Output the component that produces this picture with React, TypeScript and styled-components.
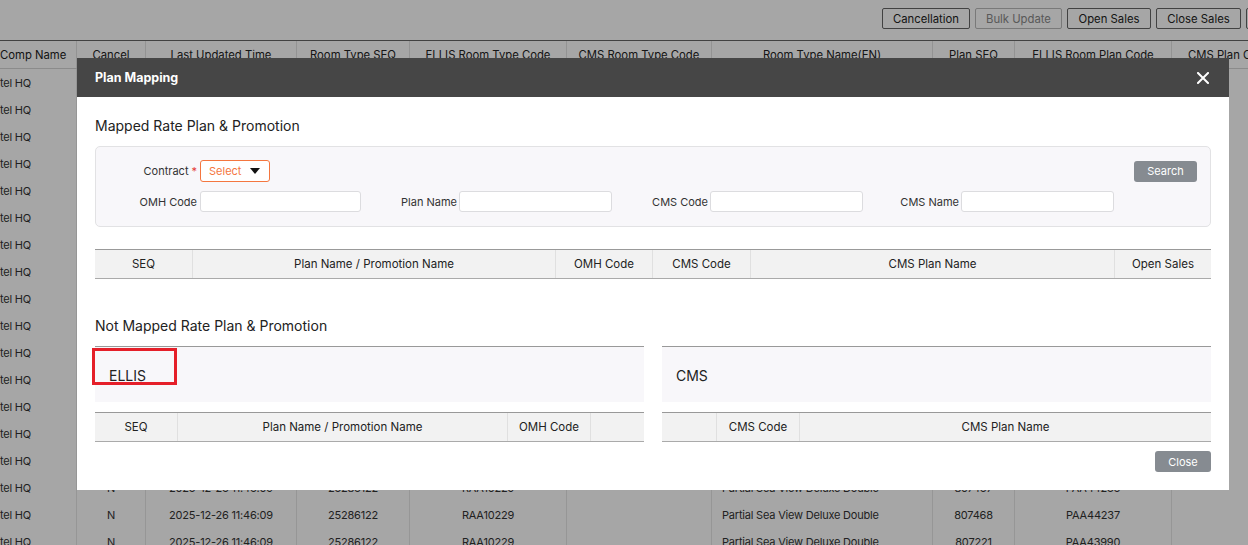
import { FC } from "react";
import styled, { createGlobalStyle } from "styled-components";

const GlobalStyle = createGlobalStyle`
  html, body {
    margin: 0;
    padding: 0;
    background: #ffffff;
  }
  body {
    font-family: Inter, "Noto Sans", Arial, sans-serif;
    color: #222;
  }
  * {
    box-sizing: border-box;
  }
`;

const Page = styled.div`
  position: relative;
  width: 1248px;
  height: 545px;
  overflow: hidden;
  background: #fff;
`;

const Toolbar = styled.div`
  display: flex;
  gap: 5px;
  height: 40px;
  padding: 8px 0 0 882px;
  overflow: hidden;
  white-space: nowrap;
`;

const ToolButton = styled.button<{ $w: number; $disabled?: boolean }>`
  flex: none;
  width: ${(p) => p.$w}px;
  height: 21px;
  padding: 0;
  font-family: inherit;
  font-size: 11.3px;
  background: #fff;
  border: 1px solid ${(p) => (p.$disabled ? "#bbb" : "#666")};
  color: ${(p) => (p.$disabled ? "#8a8a8a" : "#222")};
  border-radius: 2px;
`;

const COLS = "76px 69px 151px 113px 157px 145px 221px 82px 157px 1fr";

const BgHead = styled.div`
  display: grid;
  grid-template-columns: ${COLS};
  height: 29px;
  border-top: 1px solid #666;
  border-bottom: 1px solid #d6d6d6;
`;

const BgHeadCell = styled.div<{ $align?: "left" | "center" | "start" }>`
  display: flex;
  align-items: center;
  justify-content: ${(p) => (p.$align === "center" || !p.$align ? "center" : "flex-start")};
  padding-left: ${(p) => (p.$align === "start" ? "16px" : "0")};
  font-size: 11.3px;
  color: #222;
  white-space: nowrap;
  overflow: hidden;
  border-left: ${(p) => (p.$align === "left" ? "none" : "1px solid #e2e2e2")};
`;

const BgRow = styled.div`
  display: grid;
  grid-template-columns: ${COLS};
  height: 27px;
`;

const BgCell = styled.div<{ $align?: "left" | "center" | "start" }>`
  display: flex;
  align-items: center;
  justify-content: ${(p) => (p.$align === "center" || !p.$align ? "center" : "flex-start")};
  padding-left: ${(p) => (p.$align === "start" ? "10px" : "0")};
  font-size: 11px;
  letter-spacing: -0.2px;
  color: #333;
  white-space: nowrap;
  overflow: hidden;
  border-left: ${(p) => (p.$align === "left" ? "none" : "1px solid #e6e6e6")};
`;

const Dim = styled.div`
  position: absolute;
  inset: 0;
  background: rgba(0, 0, 0, 0.35);
`;

const Modal = styled.div`
  position: absolute;
  left: 77px;
  top: 58px;
  width: 1152px;
  background: #fff;
`;

const ModalHeader = styled.div`
  display: flex;
  align-items: center;
  justify-content: space-between;
  height: 39px;
  padding: 0 20px 0 18px;
  background: #464646;
`;

const ModalTitle = styled.div`
  color: #fff;
  font-size: 12.5px;
  font-weight: 700;
`;

const ModalBody = styled.div`
  display: flex;
  flex-direction: column;
  padding: 20px 18px 18px;
`;

const SectionTitle = styled.div<{ $top?: number }>`
  font-size: 14px;
  line-height: 18px;
  color: #222;
  margin-top: ${(p) => p.$top ?? 0}px;
`;

const FilterBox = styled.div`
  display: flex;
  flex-direction: column;
  gap: 9px;
  height: 81px;
  margin-top: 11px;
  padding: 13px 13px 0 0;
  background: #f8f7fa;
  border: 1px solid #e2e2e4;
  border-radius: 5px;
`;

const FilterRow = styled.div`
  display: flex;
  align-items: center;
`;

const Field = styled.div`
  display: flex;
  align-items: center;
`;

const Label = styled.label<{ $w: number }>`
  width: ${(p) => p.$w}px;
  text-align: right;
  font-size: 11px;
  color: #333;
  white-space: nowrap;
`;

const Required = styled.span`
  color: #e53935;
  margin-left: 3px;
`;

const TextInput = styled.input<{ $w: number; $gap: number }>`
  width: ${(p) => p.$w}px;
  height: 21px;
  margin-left: ${(p) => p.$gap}px;
  border: 1px solid #dcdcdf;
  border-radius: 3px;
  background: #fff;
  outline: none;
`;

const SelectBox = styled.div`
  display: flex;
  align-items: center;
  justify-content: space-between;
  width: 70px;
  height: 22px;
  margin-left: 3px;
  padding: 0 9px 0 8px;
  border: 1px solid #f4763f;
  border-radius: 3px;
  background: #fff;
  color: #f4763f;
  font-size: 11px;
`;

const Spacer = styled.div`
  flex: 1;
`;

const GrayButton = styled.button<{ $w: number }>`
  width: ${(p) => p.$w}px;
  height: 21px;
  padding: 0;
  border: none;
  border-radius: 3px;
  background: #868b91;
  color: #fff;
  font-family: inherit;
  font-size: 11px;
`;

const HeadTable = styled.div<{ $cols: string; $top: number }>`
  display: grid;
  grid-template-columns: ${(p) => p.$cols};
  height: 30px;
  margin-top: ${(p) => p.$top}px;
  background: #f2f2f2;
  border-top: 1px solid #999;
  border-bottom: 1px solid #aaa;
`;

const HeadCell = styled.div`
  display: flex;
  align-items: center;
  justify-content: center;
  font-size: 11.5px;
  color: #222;
  white-space: nowrap;
  & + & {
    border-left: 1px solid #e0e0e0;
  }
`;

const Split = styled.div`
  display: grid;
  grid-template-columns: 1fr 1fr;
  column-gap: 18px;
  margin-top: 11px;
`;

const SplitCol = styled.div`
  display: flex;
  flex-direction: column;
`;

const SidePanel = styled.div`
  position: relative;
  display: flex;
  align-items: center;
  height: 56px;
  padding: 2px 0 0 14px;
  background: #f8f7fa;
  border-top: 1px solid #999;
  font-size: 14px;
  color: #222;
`;

const Highlight = styled.div`
  position: absolute;
  left: -3px;
  top: 1px;
  width: 85px;
  height: 37px;
  border: 3px solid #e51f29;
  pointer-events: none;
`;

const Footer = styled.div`
  display: flex;
  justify-content: flex-end;
  margin-top: 9px;
`;

const CloseIcon: FC = () => (
  <svg width="12" height="12" viewBox="0 0 12 12">
    <path d="M1 1 L11 11 M11 1 L1 11" stroke="#fff" strokeWidth="2" strokeLinecap="square" />
  </svg>
);

const Caret: FC = () => (
  <svg width="10" height="6" viewBox="0 0 10 6">
    <polygon points="0,0 10,0 5,6" fill="#111" />
  </svg>
);

const bgHeaders = [
  "Comp Name",
  "Cancel",
  "Last Updated Time",
  "Room Type SEQ",
  "ELLIS Room Type Code",
  "CMS Room Type Code",
  "Room Type Name(EN)",
  "Plan SEQ",
  "ELLIS Room Plan Code",
  "CMS Plan Code",
];

const planSeqs = [
  "807451", "807452", "807453", "807454", "807455", "807456", "807457", "807458", "807459",
  "807460", "807461", "807462", "807463", "807464", "807465", "807467", "807468", "807221",
];
const planCodes = [
  "PAA44220", "PAA44221", "PAA44222", "PAA44223", "PAA44224", "PAA44225", "PAA44226", "PAA44227",
  "PAA44228", "PAA44229", "PAA44230", "PAA44231", "PAA44232", "PAA44233", "PAA44234", "PAA44236",
  "PAA44237", "PAA43990",
];

export default function App() {
  return (
    <Page>
      <GlobalStyle />
      <Toolbar>
        <ToolButton $w={88}>Cancellation</ToolButton>
        <ToolButton $w={87} $disabled>Bulk Update</ToolButton>
        <ToolButton $w={84}>Open Sales</ToolButton>
        <ToolButton $w={85}>Close Sales</ToolButton>
        <ToolButton $w={70}>Export</ToolButton>
      </Toolbar>
      <BgHead>
        {bgHeaders.map((h, i) => (
          <BgHeadCell key={h} $align={i === 0 ? "left" : i === bgHeaders.length - 1 ? "start" : "center"}>
            {h}
          </BgHeadCell>
        ))}
      </BgHead>
      {planSeqs.map((seq, i) => (
        <BgRow key={i}>
          <BgCell $align="left">tel HQ</BgCell>
          <BgCell>N</BgCell>
          <BgCell>2025-12-26 11:46:09</BgCell>
          <BgCell>25286122</BgCell>
          <BgCell>RAA10229</BgCell>
          <BgCell />
          <BgCell $align="start">Partial Sea View Deluxe Double</BgCell>
          <BgCell>{seq}</BgCell>
          <BgCell>{planCodes[i]}</BgCell>
          <BgCell />
        </BgRow>
      ))}
      <Dim />
      <Modal>
        <ModalHeader>
          <ModalTitle>Plan Mapping</ModalTitle>
          <CloseIcon />
        </ModalHeader>
        <ModalBody>
          <SectionTitle>Mapped Rate Plan &amp; Promotion</SectionTitle>
          <FilterBox>
            <FilterRow>
              <Field>
                <Label $w={101}>
                  Contract<Required>*</Required>
                </Label>
                <SelectBox>
                  Select
                  <Caret />
                </SelectBox>
              </Field>
              <Spacer />
              <GrayButton $w={63}>Search</GrayButton>
            </FilterRow>
            <FilterRow>
              <Field>
                <Label $w={101}>OMH Code</Label>
                <TextInput $w={161} $gap={3} />
              </Field>
              <Field>
                <Label $w={96}>Plan Name</Label>
                <TextInput $w={153} $gap={2} />
              </Field>
              <Field>
                <Label $w={96}>CMS Code</Label>
                <TextInput $w={153} $gap={2} />
              </Field>
              <Field>
                <Label $w={96}>CMS Name</Label>
                <TextInput $w={153} $gap={2} />
              </Field>
            </FilterRow>
          </FilterBox>
          <HeadTable $cols="97px 363px 97px 98px 364px 1fr" $top={22}>
            <HeadCell>SEQ</HeadCell>
            <HeadCell>Plan Name / Promotion Name</HeadCell>
            <HeadCell>OMH Code</HeadCell>
            <HeadCell>CMS Code</HeadCell>
            <HeadCell>CMS Plan Name</HeadCell>
            <HeadCell>Open Sales</HeadCell>
          </HeadTable>
          <SectionTitle $top={38}>Not Mapped Rate Plan &amp; Promotion</SectionTitle>
          <Split>
            <SplitCol>
              <SidePanel>
                ELLIS
                <Highlight />
              </SidePanel>
              <HeadTable $cols="82px 330px 83px 1fr" $top={10}>
                <HeadCell>SEQ</HeadCell>
                <HeadCell>Plan Name / Promotion Name</HeadCell>
                <HeadCell>OMH Code</HeadCell>
                <HeadCell />
              </HeadTable>
            </SplitCol>
            <SplitCol>
              <SidePanel>CMS</SidePanel>
              <HeadTable $cols="54px 83px 1fr" $top={10}>
                <HeadCell />
                <HeadCell>CMS Code</HeadCell>
                <HeadCell>CMS Plan Name</HeadCell>
              </HeadTable>
            </SplitCol>
          </Split>
          <Footer>
            <GrayButton $w={56}>Close</GrayButton>
          </Footer>
        </ModalBody>
      </Modal>
    </Page>
  );
}
